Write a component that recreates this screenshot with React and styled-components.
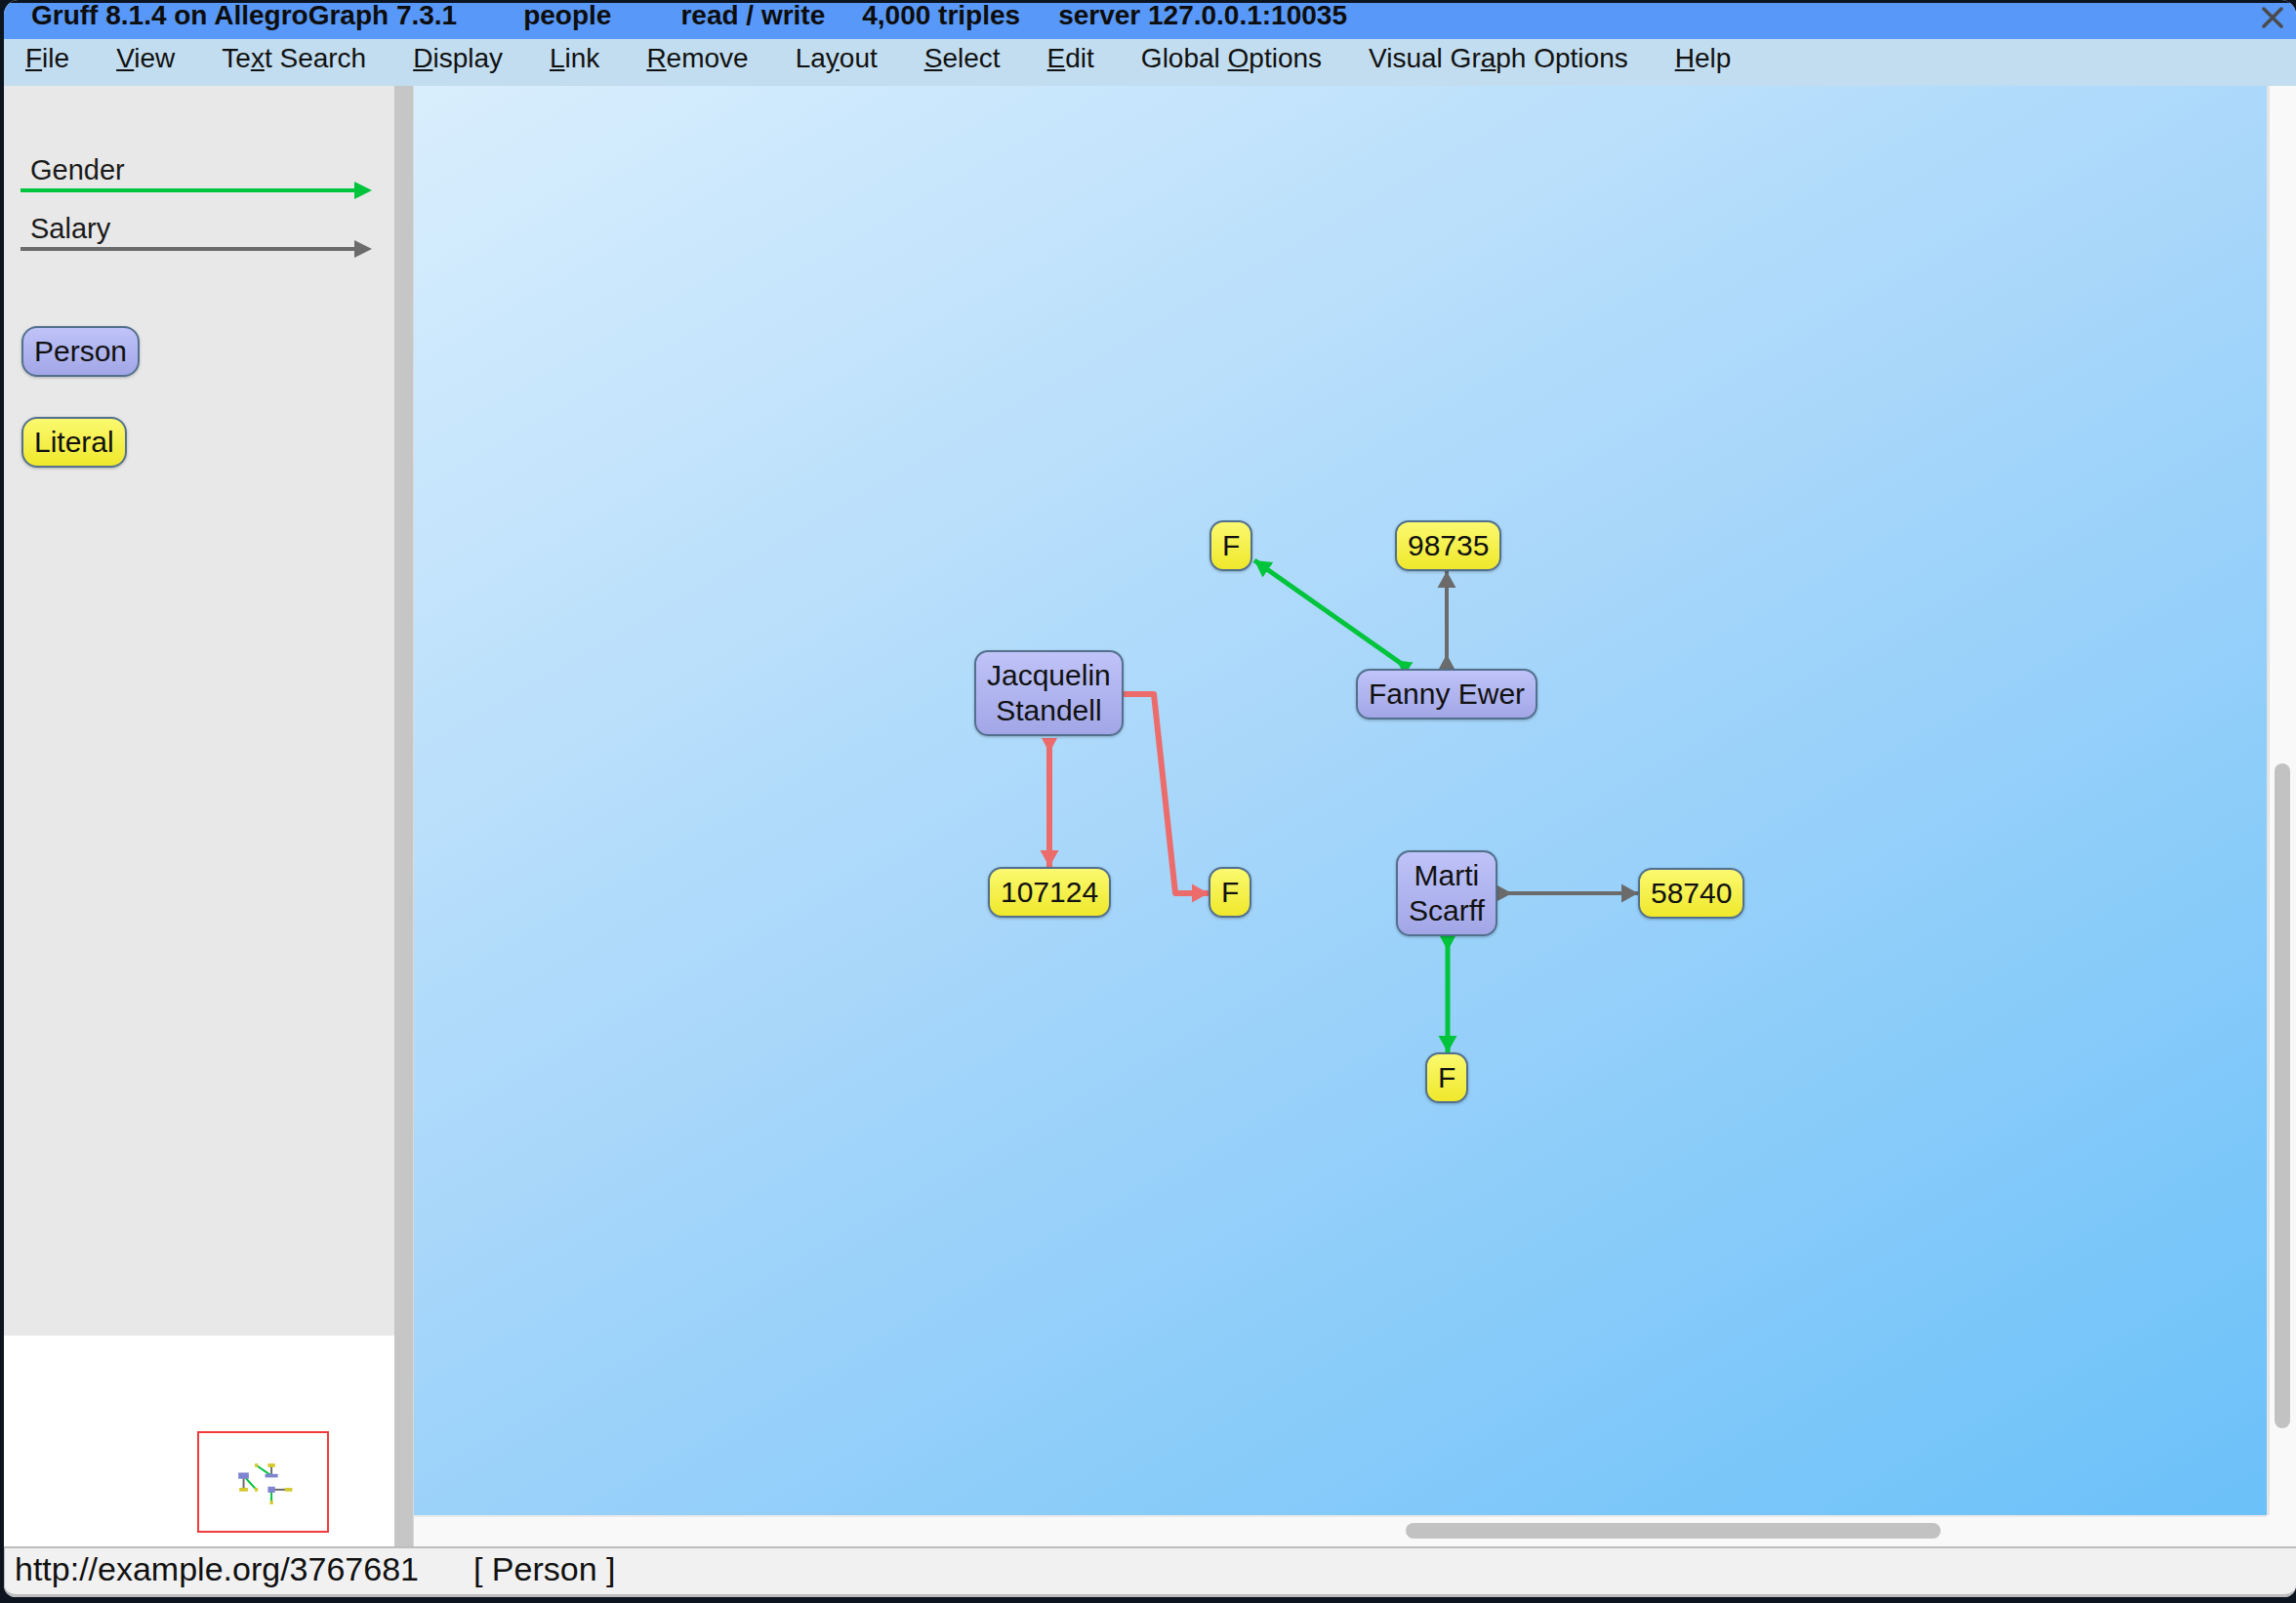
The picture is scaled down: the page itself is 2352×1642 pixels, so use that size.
import React from "react";
import styled, { createGlobalStyle } from "styled-components";

// Gruff main window: title bar, menu, legend + overview on the left, graph canvas on the right

const COLORS = {
	green: "#00c43c",
	gray: "#6b6b6b",
	red: "#ec6b6b",
};

const MENU = [
	["File", 0],
	["View", 0],
	["Text Search", 2],
	["Display", 0],
	["Link", 0],
	["Remove", 0],
	["Layout", 2],
	["Select", 0],
	["Edit", 0],
	["Global Options", 7],
	["Visual Graph Options", 9],
	["Help", 0],
];

// node positions are canvas coordinates (the canvas is a free drawing surface)
const NODES = [
	{ id: "jac", lines: ["Jacquelin", "Standell"], kind: "person", x: 574, y: 578, w: 153, h: 90 },
	{ id: "f1", lines: ["F"], kind: "literal", x: 815, y: 445, w: 44, h: 52 },
	{ id: "s1", lines: ["98735"], kind: "literal", x: 1005, y: 445, w: 107, h: 52 },
	{ id: "fan", lines: ["Fanny Ewer"], kind: "person", x: 965, y: 597, w: 187, h: 52 },
	{ id: "s2", lines: ["107124"], kind: "literal", x: 588, y: 800, w: 125, h: 53 },
	{ id: "f2", lines: ["F"], kind: "literal", x: 814, y: 800, w: 45, h: 53 },
	{ id: "mar", lines: ["Marti", "Scarff"], kind: "person", x: 1006, y: 783, w: 104, h: 88 },
	{ id: "s3", lines: ["58740"], kind: "literal", x: 1254, y: 801, w: 109, h: 52 },
	{ id: "f3", lines: ["F"], kind: "literal", x: 1036, y: 990, w: 46, h: 53 },
];

const EDGES = [
	{ color: "green", width: 5, tail: true, points: [[1019, 597], [861, 486]] },
	{ color: "gray", width: 4, tail: true, points: [[1058, 597], [1058, 497]] },
	{ color: "red", width: 6, tail: true, points: [[651, 668], [651, 800]] },
	{ color: "red", width: 6, tail: false, points: [[727, 623], [758, 623], [780, 827], [814, 827]] },
	{ color: "gray", width: 4, tail: true, points: [[1110, 827], [1254, 827]] },
	{ color: "green", width: 5, tail: true, points: [[1059, 871], [1059, 990]] },
];

// overview uses the real predicate colours (red is only the selection highlight)
const OVERVIEW_EDGES = [
	["fan", "f1", "green"],
	["fan", "s1", "gray"],
	["jac", "s2", "gray"],
	["jac", "f2", "green"],
	["mar", "s3", "gray"],
	["mar", "f3", "green"],
];

const nodeById = (id) => NODES.find((n) => n.id === id);

const Mnemonic = ({ label, index }) => (
	<>
		{label.slice(0, index)}
		<u>{label[index]}</u>
		{label.slice(index + 1)}
	</>
);

const LegendArrow = ({ color }) => (
	<svg width='360' height='18' viewBox='0 0 360 18'>
		<line x1='0' y1='9' x2='344' y2='9' stroke={color} strokeWidth='4' />
		<path d='M342,0 L360,9 L342,18 z' fill={color} />
	</svg>
);

const CloseIcon = () => (
	<CloseSvg width='22' height='22' viewBox='0 0 22 22'>
		<path d='M2,2 L20,20 M20,2 L2,20' stroke='#4b4b4b' strokeWidth='3.5' strokeLinecap='round' />
	</CloseSvg>
);

const EdgeMarkers = () => (
	<defs>
		{Object.entries(COLORS).map(([name, c]) => (
			<React.Fragment key={name}>
				<marker
					id={`end-${name}`}
					markerUnits='userSpaceOnUse'
					viewBox='0 -10 20 20'
					markerWidth='20'
					markerHeight='20'
					refX='17'
					refY='0'
					orient='auto'>
					<path d='M0,-9.5 L17,0 L0,9.5 z' fill={c} />
				</marker>
				<marker
					id={`start-${name}`}
					markerUnits='userSpaceOnUse'
					viewBox='0 -10 20 20'
					markerWidth='20'
					markerHeight='20'
					refX='0'
					refY='0'
					orient='auto'>
					<path d='M0,-8 L15,0 L0,8 z' fill={c} />
				</marker>
			</React.Fragment>
		))}
	</defs>
);

const Overview = () => (
	<svg width='131' height='100' viewBox='0 0 131 100'>
		<g transform='scale(0.07)'>
			{OVERVIEW_EDGES.map(([a, b, color]) => {
				const s = nodeById(a);
				const t = nodeById(b);
				return (
					<line
						key={a + b}
						x1={s.x + s.w / 2}
						y1={s.y + s.h / 2}
						x2={t.x + t.w / 2}
						y2={t.y + t.h / 2}
						stroke={COLORS[color]}
						strokeWidth='28'
					/>
				);
			})}
			{NODES.map((n) => (
				<rect
					key={n.id}
					x={n.x}
					y={n.y}
					width={n.w}
					height={n.h}
					fill={n.kind === "person" ? "#7f84cf" : "#d4c92c"}
				/>
			))}
		</g>
	</svg>
);

const App = () => {
	return (
		<>
			<GlobalStyle />
			<Window>
				<TitleBar>
					<TitleField>Gruff 8.1.4 on AllegroGraph 7.3.1</TitleField>
					<TitleField $gap={68}>people</TitleField>
					<TitleField $gap={71}>read / write</TitleField>
					<TitleField $gap={38}>4,000 triples</TitleField>
					<TitleField $gap={39}>server 127.0.0.1:10035</TitleField>
					<CloseIcon />
				</TitleBar>

				<MenuBar>
					{MENU.map(([label, index]) => (
						<MenuItem key={label}>
							<Mnemonic label={label} index={index} />
						</MenuItem>
					))}
				</MenuBar>

				<Main>
					<SidePanel>
						<LegendArea>
							<LegendLabel>Gender</LegendLabel>
							<LegendArrow color={COLORS.green} />
							<LegendLabel $top={18}>Salary</LegendLabel>
							<LegendArrow color={COLORS.gray} />
							<LegendNode $kind='person' $top={70}>
								Person
							</LegendNode>
							<LegendNode $kind='literal' $top={41}>
								Literal
							</LegendNode>
						</LegendArea>
						<OverviewArea>
							<ViewportFrame>
								<Overview />
							</ViewportFrame>
						</OverviewArea>
					</SidePanel>

					<Splitter />

					<CanvasArea>
						<Canvas>
							<EdgeLayer width='1898' height='1464'>
								<EdgeMarkers />
								{EDGES.map((e, i) => (
									<polyline
										key={i}
										points={e.points.map((p) => p.join(",")).join(" ")}
										fill='none'
										stroke={COLORS[e.color]}
										strokeWidth={e.width}
										strokeLinejoin='round'
										markerStart={e.tail ? `url(#start-${e.color})` : undefined}
										markerEnd={`url(#end-${e.color})`}
									/>
								))}
							</EdgeLayer>
							{NODES.map((n) => (
								<GraphNode
									key={n.id}
									$kind={n.kind}
									style={{ left: n.x, top: n.y }}>
									{n.lines.map((l) => (
										<div key={l}>{l}</div>
									))}
								</GraphNode>
							))}
						</Canvas>
						<VScroll>
							<VThumb />
						</VScroll>
						<HScroll>
							<HThumb />
						</HScroll>
						<ScrollCorner />
					</CanvasArea>
				</Main>

				<StatusBar>
					<StatusField>http://example.org/3767681</StatusField>
					<StatusField $gap={56}>[ Person ]</StatusField>
				</StatusBar>
			</Window>
		</>
	);
};

export default App;

// ====================== STYLED COMPONENTS ======================

const GlobalStyle = createGlobalStyle`
	html, body {
		margin: 0;
		padding: 0;
		background: #0c1420;
	}
	body {
		font-family: "Liberation Sans", Arial, sans-serif;
		color: #111;
		overflow: hidden;
	}
`;

const Window = styled.div`
	margin: 0 0 6px 4px;
	width: 2348px;
	height: 1636px;
	border-radius: 15px 15px 12px 12px;
	overflow: hidden;
	display: flex;
	flex-direction: column;
	background: #f9f9f9;
`;

// the top 3px stays dark like the desktop behind the window
const TitleBar = styled.div`
	height: 40px;
	flex-shrink: 0;
	box-sizing: border-box;
	display: flex;
	align-items: flex-start;
	padding: 0 13px 0 28px;
	background: linear-gradient(to bottom, #0c1420 0 3px, #5898f8 3px);
`;

const TitleField = styled.span`
	margin-left: ${(props) => props.$gap || 0}px;
	font-size: 28px;
	font-weight: bold;
	line-height: 31px;
	white-space: nowrap;
	color: #0d0d0d;
`;

const CloseSvg = styled.svg`
	margin: 7px 0 0 auto;
`;

const MenuBar = styled.div`
	height: 48px;
	flex-shrink: 0;
	box-sizing: border-box;
	display: flex;
	align-items: flex-start;
	gap: 48px;
	padding: 4px 0 0 22px;
	background: #c2ddef;
`;

const MenuItem = styled.span`
	font-size: 28px;
	line-height: 32px;
	white-space: nowrap;
	color: #111;

	u {
		text-underline-offset: 2px;
	}
`;

const Main = styled.div`
	height: 1496px;
	flex-shrink: 0;
	display: flex;
`;

const SidePanel = styled.div`
	width: 400px;
	display: flex;
	flex-direction: column;
`;

const LegendArea = styled.div`
	flex: 1;
	display: flex;
	flex-direction: column;
	align-items: flex-start;
	padding: 74px 0 0 17px;
	background: #e8e8e8;
`;

const LegendLabel = styled.div`
	margin: ${(props) => props.$top || 0}px 0 0 10px;
	font-size: 29px;
	line-height: 24px;
	color: #1a1a1a;
`;

const nodeFill = (kind) =>
	kind === "person"
		? "linear-gradient(to bottom, #bfc3f8, #a2a6e6)"
		: "linear-gradient(to bottom, #fbf970, #efe82b)";

const LegendNode = styled.div`
	margin: ${(props) => props.$top || 0}px 0 0 1px;
	height: 52px;
	box-sizing: border-box;
	display: flex;
	align-items: center;
	padding: 0 11px;
	border: 2px solid #52708e;
	border-radius: 16px;
	background: ${(props) => nodeFill(props.$kind)};
	box-shadow: 0 1px 3px rgba(0, 0, 0, 0.25);
	font-size: 30px;
	color: #111;
`;

const OverviewArea = styled.div`
	height: 216px;
	flex-shrink: 0;
	box-sizing: border-box;
	padding: 98px 0 0 198px;
	background: #ffffff;
`;

const ViewportFrame = styled.div`
	width: 135px;
	height: 104px;
	box-sizing: border-box;
	border: 2px solid #f03c3c;

	svg {
		display: block;
	}
`;

const Splitter = styled.div`
	width: 19px;
	border-right: 1px solid #d9d9d9;
	background: #c6c6c6;
`;

const CanvasArea = styled.div`
	flex: 1;
	display: grid;
	grid-template-columns: 1fr 30px;
	grid-template-rows: 1fr 32px;
`;

const Canvas = styled.div`
	position: relative;
	overflow: hidden;
	background: linear-gradient(150deg, #d9eefd 0%, #a4d5fa 50%, #6bc1f9 100%);
`;

const EdgeLayer = styled.svg`
	position: absolute;
	left: 0;
	top: 0;
`;

const GraphNode = styled.div`
	position: absolute;
	box-sizing: border-box;
	padding: 6px 11px;
	border: 2px solid #52708e;
	border-radius: 14px;
	background: ${(props) => nodeFill(props.$kind)};
	box-shadow: 0 1px 3px rgba(0, 0, 0, 0.25);
	font-size: 30px;
	line-height: 36px;
	text-align: center;
	white-space: nowrap;
	color: #111;
`;

const VScroll = styled.div`
	box-sizing: border-box;
	padding: 694px 0 0 5px;
	border-left: 3px solid #e4e4e4;
	background: #f9f9f9;
`;

const VThumb = styled.div`
	width: 16px;
	height: 681px;
	border-radius: 8px;
	background: #c2c2c2;
`;

const HScroll = styled.div`
	box-sizing: border-box;
	padding: 6px 0 0 1016px;
	border-top: 2px solid #e9e9e9;
	background: #f9f9f9;
`;

const HThumb = styled.div`
	width: 548px;
	height: 16px;
	border-radius: 8px;
	background: #c2c2c2;
`;

const ScrollCorner = styled.div`
	background: #f9f9f9;
`;

const StatusBar = styled.div`
	height: 52px;
	flex-shrink: 0;
	box-sizing: border-box;
	display: flex;
	align-items: flex-start;
	padding: 0 0 0 10px;
	border-top: 2px solid #bdbdbd;
	border-bottom: 3px solid #bdbdbd;
	border-left: 1px solid #bdbdbd;
	border-radius: 0 0 12px 12px;
	background: #f1f1f1;
`;

const StatusField = styled.span`
	margin-left: ${(props) => props.$gap || 0}px;
	font-size: 34px;
	line-height: 42px;
	white-space: nowrap;
	color: #111;
`;
